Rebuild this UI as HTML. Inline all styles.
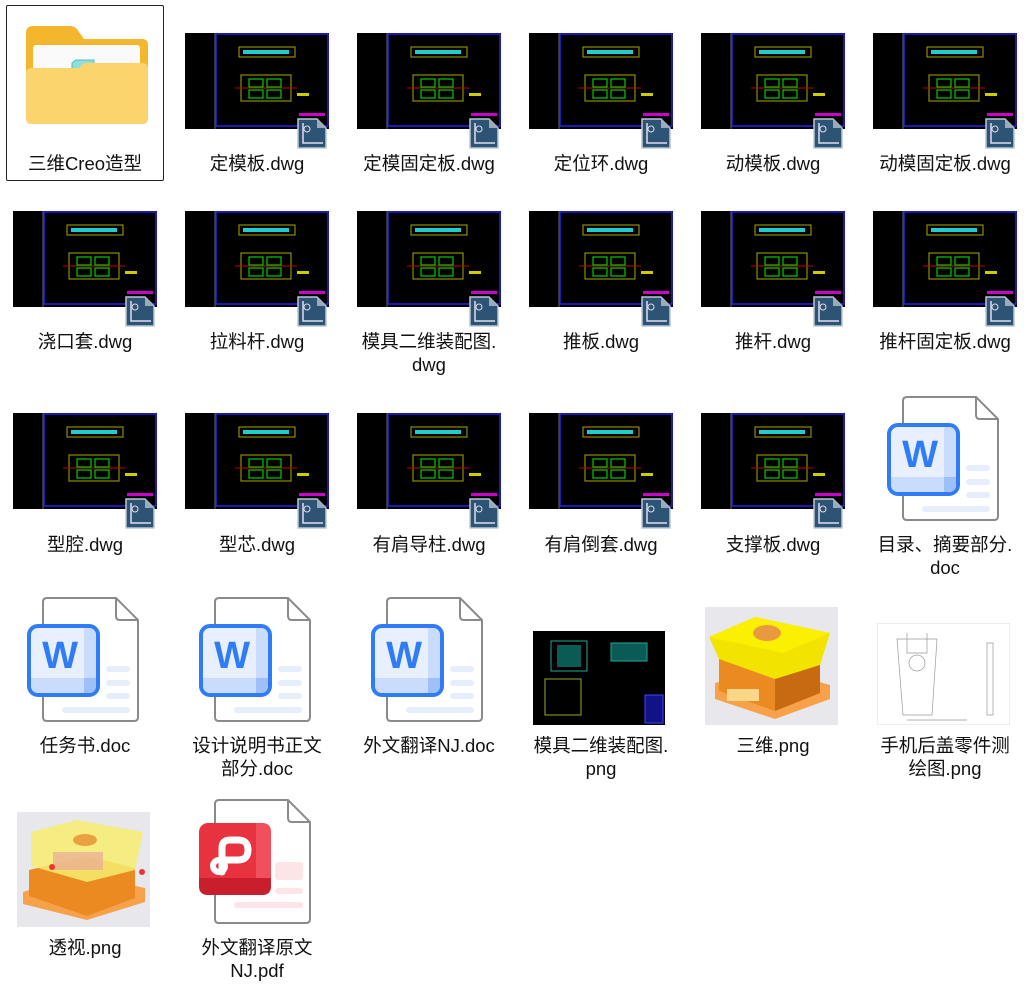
<!DOCTYPE html>
<html><head><meta charset="utf-8"><style>
body{margin:0;width:1024px;height:995px;background:#fff;position:relative;overflow:hidden;font-family:"Liberation Sans","Noto Sans CJK SC",sans-serif}
.l{position:absolute;width:158px;text-align:center;font-size:18.5px;line-height:23px;color:#111}
.t{position:absolute;width:144px;height:96px}
.b{position:absolute;width:30px;height:32px}
.i{position:absolute;width:158px;height:130px}
.p{position:absolute}
</style></head><body>
<svg width="0" height="0" style="position:absolute">
<defs>
<symbol id="dwg" viewBox="0 0 144 96">
<rect width="144" height="96" fill="#000"/>
<line x1="30" y1="0" x2="30" y2="96" stroke="#666" stroke-width="1"/>
<rect x="31" y="1" width="112" height="92" fill="none" stroke="#2222ee" stroke-width="1.5"/>
<rect x="58" y="17" width="46" height="4" fill="#2cc" />
<rect x="54" y="14" width="56" height="10" fill="none" stroke="#aa0"/>
<rect x="56" y="42" width="50" height="26" fill="none" stroke="#aa0"/>
<rect x="64" y="46" width="14" height="8" fill="none" stroke="#0c0" stroke-width="1.2"/>
<rect x="82" y="46" width="14" height="8" fill="none" stroke="#0c0" stroke-width="1.2"/>
<rect x="64" y="57" width="14" height="8" fill="none" stroke="#0c0" stroke-width="1.2"/>
<rect x="82" y="57" width="14" height="8" fill="none" stroke="#0c0" stroke-width="1.2"/>
<line x1="50" y1="55" x2="112" y2="55" stroke="#b00"/>
<rect x="112" y="60" width="12" height="3" fill="#cc0"/>
<rect x="114" y="80" width="26" height="3" fill="#c0c"/>
</symbol>
<symbol id="badge" viewBox="0 0 30 32">
<path d="M1 2 H20 L29 11 V31 H1 Z" fill="#2e5475" stroke="#bcc8d4" stroke-width="1.5"/>
<path d="M20 2 V11 H29" fill="#9ab" />
<path d="M6 6 V26 H26" fill="none" stroke="#dde" stroke-width="1.5"/>
<circle cx="10" cy="12" r="3" fill="none" stroke="#dde"/>
</symbol>
<symbol id="word" viewBox="0 0 158 130">
<path d="M41 4 H110 L132 26 V123 Q132 127 128 127 H41 Q37 127 37 123 V8 Q37 4 41 4 Z" fill="#fff" stroke="#8a8a8a" stroke-width="2"/>
<path d="M110 4 V22 Q110 26 114 26 H132" fill="none" stroke="#8a8a8a" stroke-width="2"/>
<rect x="100" y="72" width="24" height="6" rx="3" fill="#e6eefb"/>
<rect x="100" y="86" width="24" height="6" rx="3" fill="#e6eefb"/>
<rect x="100" y="99" width="24" height="6" rx="3" fill="#e6eefb"/>
<rect x="56" y="113" width="68" height="6" rx="3" fill="#e6eefb"/>
<rect x="23" y="32" width="69" height="69" rx="9" fill="#e8f0ff" stroke="#2f7cf6" stroke-width="4"/>
<path d="M78 34 H82 Q90 34 90 42 V91 Q90 99 82 99 H78 Z" fill="#c9dcfb"/>
<path d="M25 84 H90 V91 Q90 99 82 99 H33 Q25 99 25 91 Z" fill="#c9dcfb"/>
<path d="M78 84 H90 V91 Q90 99 82 99 H78 Z" fill="#9ebff7"/>
<text x="54" y="74" text-anchor="middle" font-family="Liberation Sans" font-weight="bold" font-size="38" fill="#2f7cf6">W</text>
</symbol>
</defs></svg>

<div class="p" style="left:6px;top:5px;width:156px;height:174px;border:1px solid #222;border-radius:2px"></div>
<svg class="p" style="left:22px;top:25px" width="128" height="102" viewBox="0 0 128 102">
<path d="M4 8 Q4 1 11 1 H48 Q54 1 57 7 L62 14 H120 Q126 14 126 20 V92 H4 Z" fill="#f3b62c"/>
<rect x="11" y="20" width="107" height="60" rx="3" fill="#fafafa"/>
<path d="M50 38 L54 35 H72 V52 H50 Z" fill="#8fdede" stroke="#5bb" />
<path d="M4 80 V48 Q4 43 10 43 H57 L62 38 H120 Q126 38 126 44 V94 Q126 99 120 99 H10 Q4 99 4 94 Z" fill="#fcd46e"/>
</svg>
<div class="l" style="left:6px;top:152px">三维Creo造型</div>

<svg class="t" style="left:185px;top:33px"><use href="#dwg"/></svg><svg class="b" style="left:297px;top:117px"><use href="#badge"/></svg><div class="l" style="left:178px;top:152px">定模板.dwg</div>
<svg class="t" style="left:357px;top:33px"><use href="#dwg"/></svg><svg class="b" style="left:469px;top:117px"><use href="#badge"/></svg><div class="l" style="left:350px;top:152px">定模固定板.dwg</div>
<svg class="t" style="left:529px;top:33px"><use href="#dwg"/></svg><svg class="b" style="left:641px;top:117px"><use href="#badge"/></svg><div class="l" style="left:522px;top:152px">定位环.dwg</div>
<svg class="t" style="left:701px;top:33px"><use href="#dwg"/></svg><svg class="b" style="left:813px;top:117px"><use href="#badge"/></svg><div class="l" style="left:694px;top:152px">动模板.dwg</div>
<svg class="t" style="left:873px;top:33px"><use href="#dwg"/></svg><svg class="b" style="left:985px;top:117px"><use href="#badge"/></svg><div class="l" style="left:866px;top:152px">动模固定板.dwg</div>

<svg class="t" style="left:13px;top:211px"><use href="#dwg"/></svg><svg class="b" style="left:125px;top:295px"><use href="#badge"/></svg><div class="l" style="left:6px;top:330px">浇口套.dwg</div>
<svg class="t" style="left:185px;top:211px"><use href="#dwg"/></svg><svg class="b" style="left:297px;top:295px"><use href="#badge"/></svg><div class="l" style="left:178px;top:330px">拉料杆.dwg</div>
<svg class="t" style="left:357px;top:211px"><use href="#dwg"/></svg><svg class="b" style="left:469px;top:295px"><use href="#badge"/></svg><div class="l" style="left:350px;top:330px">模具二维装配图.<br>dwg</div>
<svg class="t" style="left:529px;top:211px"><use href="#dwg"/></svg><svg class="b" style="left:641px;top:295px"><use href="#badge"/></svg><div class="l" style="left:522px;top:330px">推板.dwg</div>
<svg class="t" style="left:701px;top:211px"><use href="#dwg"/></svg><svg class="b" style="left:813px;top:295px"><use href="#badge"/></svg><div class="l" style="left:694px;top:330px">推杆.dwg</div>
<svg class="t" style="left:873px;top:211px"><use href="#dwg"/></svg><svg class="b" style="left:985px;top:295px"><use href="#badge"/></svg><div class="l" style="left:866px;top:330px">推杆固定板.dwg</div>

<svg class="t" style="left:13px;top:413px"><use href="#dwg"/></svg><svg class="b" style="left:125px;top:497px"><use href="#badge"/></svg><div class="l" style="left:6px;top:533px">型腔.dwg</div>
<svg class="t" style="left:185px;top:413px"><use href="#dwg"/></svg><svg class="b" style="left:297px;top:497px"><use href="#badge"/></svg><div class="l" style="left:178px;top:533px">型芯.dwg</div>
<svg class="t" style="left:357px;top:413px"><use href="#dwg"/></svg><svg class="b" style="left:469px;top:497px"><use href="#badge"/></svg><div class="l" style="left:350px;top:533px">有肩导柱.dwg</div>
<svg class="t" style="left:529px;top:413px"><use href="#dwg"/></svg><svg class="b" style="left:641px;top:497px"><use href="#badge"/></svg><div class="l" style="left:522px;top:533px">有肩倒套.dwg</div>
<svg class="t" style="left:701px;top:413px"><use href="#dwg"/></svg><svg class="b" style="left:813px;top:497px"><use href="#badge"/></svg><div class="l" style="left:694px;top:533px">支撑板.dwg</div>
<svg class="i" style="left:866px;top:393px"><use href="#word"/></svg><div class="l" style="left:866px;top:533px">目录、摘要部分.<br>doc</div>

<svg class="i" style="left:6px;top:594px"><use href="#word"/></svg><div class="l" style="left:6px;top:734px">任务书.doc</div>
<svg class="i" style="left:178px;top:594px"><use href="#word"/></svg><div class="l" style="left:178px;top:734px">设计说明书正文<br>部分.doc</div>
<svg class="i" style="left:350px;top:594px"><use href="#word"/></svg><div class="l" style="left:350px;top:734px">外文翻译NJ.doc</div>
<svg class="p" style="left:533px;top:631px" width="132" height="94" viewBox="0 0 132 94">
<rect width="132" height="94" fill="#000"/>
<rect x="18" y="10" width="36" height="30" fill="none" stroke="#2a9" />
<rect x="24" y="14" width="24" height="22" fill="#0a5a55"/>
<rect x="78" y="12" width="36" height="18" fill="#0a5a55" stroke="#2a9"/>
<rect x="12" y="48" width="36" height="36" fill="none" stroke="#9a2"/>
<rect x="112" y="64" width="18" height="28" fill="#118" stroke="#44f"/>
</svg>
<div class="l" style="left:522px;top:734px">模具二维装配图.<br>png</div>
<svg class="p" style="left:705px;top:607px" width="133" height="118" viewBox="0 0 133 118">
<rect width="133" height="118" fill="#e8e8ec"/>
<path d="M10 76 L70 62 L125 78 L125 92 L70 112 L10 92 Z" fill="#f7a14b"/>
<path d="M14 50 L70 38 L115 54 L115 86 L70 104 L14 84 Z" fill="#ec8a22"/>
<path d="M14 50 L70 38 L115 54 L70 68 Z" fill="#f5b02a"/>
<path d="M70 68 L115 54 L115 86 L70 104 Z" fill="#c86a12"/>
<path d="M4 30 L50 10 L125 26 L115 58 L70 72 L14 52 Z" fill="#f2e400"/>
<path d="M4 30 L50 10 L125 26 L78 46 Z" fill="#fbf000"/>
<ellipse cx="62" cy="26" rx="14" ry="8" fill="#e99a40"/>
<rect x="22" y="82" width="32" height="12" fill="#fbd889"/>
</svg>
<div class="l" style="left:694px;top:734px">三维.png</div>
<svg class="p" style="left:877px;top:623px" width="133" height="102" viewBox="0 0 133 102">
<rect width="133" height="102" fill="#fff" stroke="#ddd"/>
<g fill="none" stroke="#999" stroke-width=".7">
<path d="M20 16 H60 L55 92 H26 Z"/><path d="M30 10 V30 H50 V10"/><circle cx="40" cy="40" r="8"/>
<path d="M110 20 V92 H116 V20 Z"/><line x1="30" y1="97" x2="90" y2="97"/>
</g></svg>
<div class="l" style="left:866px;top:734px">手机后盖零件测<br>绘图.png</div>

<svg class="p" style="left:17px;top:812px" width="133" height="115" viewBox="0 0 133 115">
<rect width="133" height="115" fill="#e8e8ec"/>
<path d="M6 80 L60 62 L128 76 L128 90 L70 108 L6 92 Z" fill="#f7a14b"/>
<path d="M12 58 L70 44 L118 56 L118 86 L70 104 L12 84 Z" fill="#ec8a22"/>
<path d="M14 20 L60 8 L126 20 L118 58 L70 70 L14 54 Z" fill="#f7ec70" opacity=".85"/>
<ellipse cx="68" cy="28" rx="12" ry="6" fill="#e9a040"/>
<rect x="36" y="40" width="50" height="18" fill="#e7a0a0" opacity=".6"/>
<circle cx="35" cy="55" r="3" fill="#e33"/><circle cx="125" cy="60" r="3" fill="#e33"/>
</svg>
<div class="l" style="left:6px;top:936px">透视.png</div>
<svg class="i" style="left:178px;top:796px" viewBox="0 0 158 130">
<path d="M41 4 H110 L132 26 V123 Q132 127 128 127 H41 Q37 127 37 123 V8 Q37 4 41 4 Z" fill="#fff" stroke="#8a8a8a" stroke-width="2"/>
<path d="M110 4 V22 Q110 26 114 26 H132" fill="none" stroke="#8a8a8a" stroke-width="2"/>
<rect x="97" y="66" width="28" height="18" rx="3" fill="#fde4e6"/>
<rect x="97" y="92" width="28" height="6" rx="3" fill="#fde4e6"/>
<rect x="56" y="106" width="69" height="6" rx="3" fill="#fde4e6"/>
<rect x="21" y="27" width="72" height="72" rx="9" fill="#e8323f"/>
<path d="M78 27 H84 Q93 27 93 36 V90 Q93 99 84 99 H78 Z" fill="#f04f5b"/>
<path d="M21 82 H93 V90 Q93 99 84 99 H30 Q21 99 21 90 Z" fill="#c91f2c"/>
<path d="M44 76 V52 Q44 44 52 44 H60 Q70 44 70 54 Q70 64 60 64 H46" fill="none" stroke="#fff" stroke-width="7" stroke-linecap="round"/>
<circle cx="41" cy="70" r="6" fill="none" stroke="#fff" stroke-width="6"/>
</svg>
<div class="l" style="left:178px;top:936px">外文翻译原文<br>NJ.pdf</div>
</body></html>
